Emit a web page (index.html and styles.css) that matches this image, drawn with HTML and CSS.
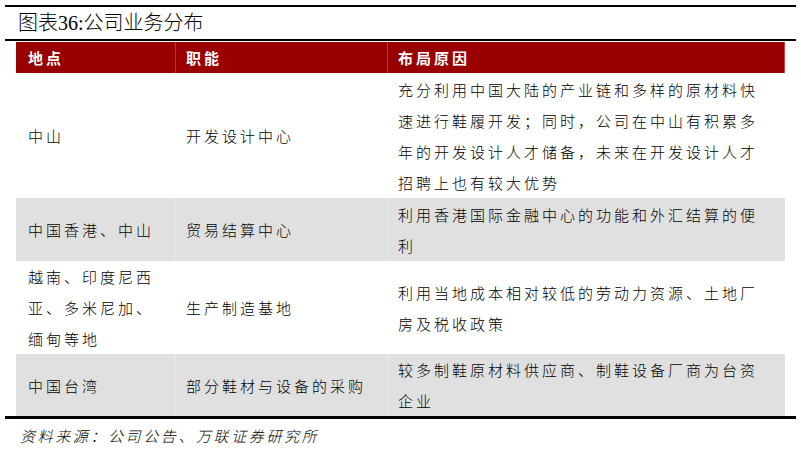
FILE: index.html
```html
<!DOCTYPE html>
<html lang="zh-CN">
<head>
<meta charset="utf-8">
<title>图表36:公司业务分布</title>
<link rel="stylesheet" href="styles.css">
</head>
<body>
<div class="frame">
  <div class="title">图表36:公司业务分布</div>
  <div class="table">
    <div class="row head">
      <div class="cell">地点</div>
      <div class="cell">职能</div>
      <div class="cell">布局原因</div>
    </div>
    <div class="row r1">
      <div class="cell">中山</div>
      <div class="cell">开发设计中心</div>
      <div class="cell">充分利用中国大陆的产业链和多样的原材料快速进行鞋履开发；同时，公司在中山有积累多年的开发设计人才储备，未来在开发设计人才招聘上也有较大优势</div>
    </div>
    <div class="row gray r2">
      <div class="cell">中国香港、中山</div>
      <div class="cell">贸易结算中心</div>
      <div class="cell">利用香港国际金融中心的功能和外汇结算的便利</div>
    </div>
    <div class="row r3">
      <div class="cell">越南、印度尼西亚、多米尼加、缅甸等地</div>
      <div class="cell">生产制造基地</div>
      <div class="cell">利用当地成本相对较低的劳动力资源、土地厂房及税收政策</div>
    </div>
    <div class="row gray r4">
      <div class="cell">中国台湾</div>
      <div class="cell">部分鞋材与设备的采购</div>
      <div class="cell">较多制鞋原材料供应商、制鞋设备厂商为台资企业</div>
    </div>
  </div>
  <div class="source">资料来源：公司公告、万联证券研究所</div>
</div>
</body>
</html>
```
FILE: styles.css
```css
html, body {
  margin: 0;
  padding: 0;
  background: #ffffff;
}

body {
  font-family: "Noto Sans CJK SC", "Liberation Serif", sans-serif;
  color: #000000;
}

.frame {
  margin: 5px 0 0 5px;
  width: 791px;
}

.title {
  border-top: 2px solid #000;
  border-bottom: 2px solid #000;
  height: 32px;
  line-height: 32px;
  padding-left: 13px;
  font-family: "Liberation Serif", "Noto Sans CJK SC", serif;
  font-size: 20px;
  font-weight: 300;
}

.table {
  margin: 1px 11px 0 11px;
}

.row {
  display: grid;
  grid-template-columns: 159px 212px 398px;
  font-size: 15px;
  letter-spacing: 3px;
  line-height: 31px;
  font-weight: 300;
}

.cell {
  padding: 0 10px 0 12px;
  display: flex;
  align-items: center;
}

.row .cell + .cell {
  border-left: 1px solid transparent;
  padding-left: 10px;
}

.head {
  background: #990000;
  color: #ffffff;
  font-weight: 700;
  height: 31px;
  box-shadow: inset -1px 0 0 #c0484a;
}

.head .cell + .cell {
  border-left-color: #b33a3a;
}

.gray {
  background: #e0e0e0;
}

.gray .cell + .cell {
  border-left-color: #e9e9e9;
}

.r1 { height: 125px; }
.r2 { height: 63px; }
.r3 { height: 93px; }
.r4 { height: 62px; }

.source {
  border-top: 3px solid #000;
  padding-left: 15px;
  padding-top: 2px;
  font-size: 15px;
  letter-spacing: 2.6px;
  line-height: 30px;
  font-style: italic;
  font-weight: 300;
}
```
